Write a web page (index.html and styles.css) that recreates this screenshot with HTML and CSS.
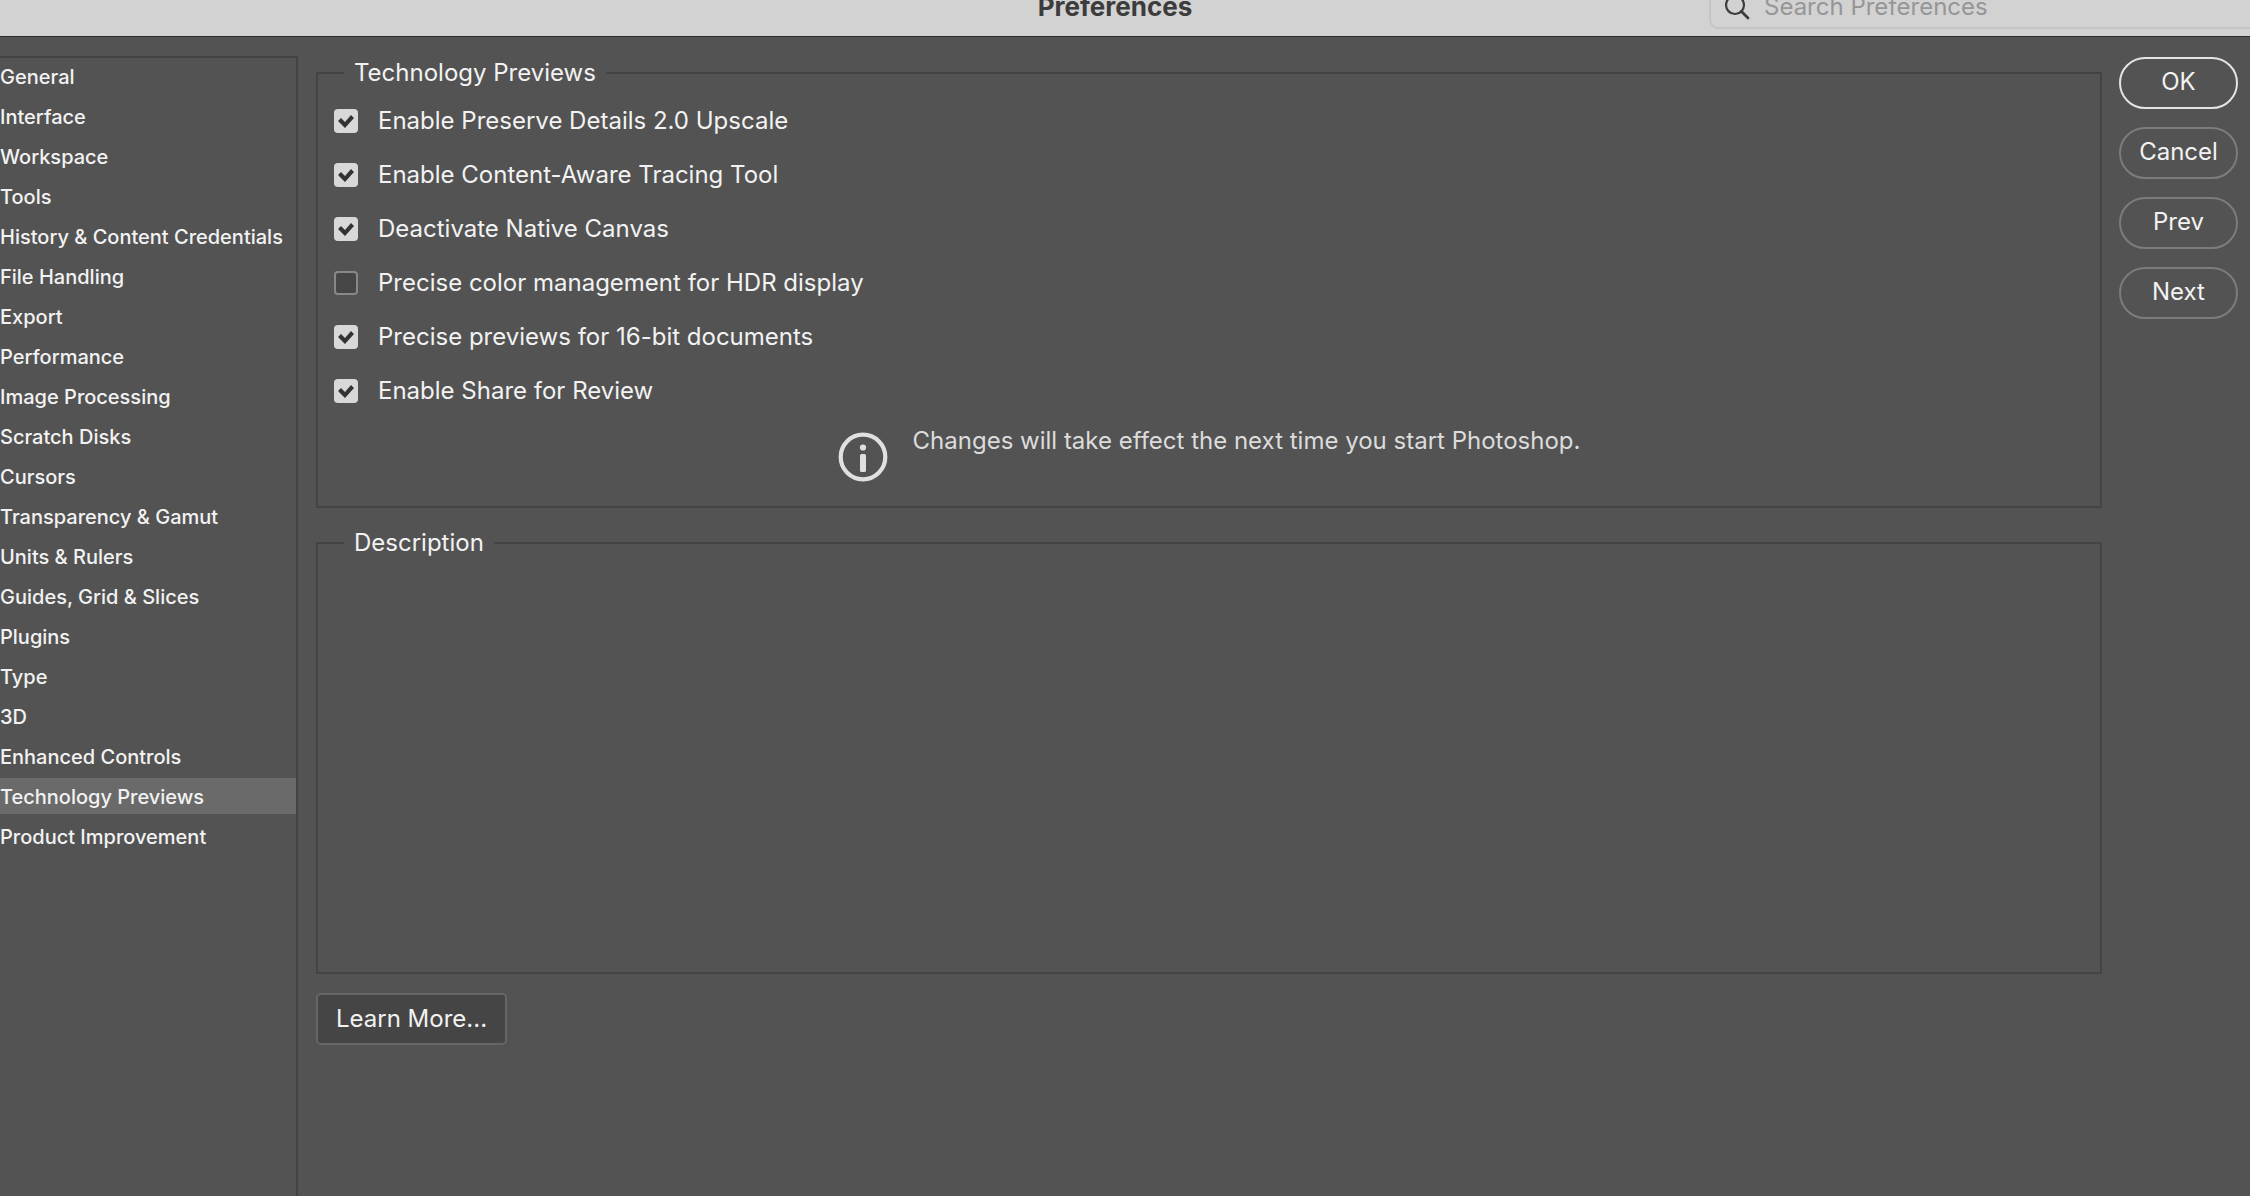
FILE: index.html
```html
<!DOCTYPE html>
<html lang="en">
	<head>
		<meta charset="utf-8" />
		<title>Preferences</title>
		<link rel="stylesheet" href="styles.css">
	</head>
	<body>
		<header class="titlebar">
			<h1>Preferences</h1>
			<label class="search">
				<svg width="26" height="26" viewBox="0 0 26 26" fill="none" stroke="#3c3c3c" stroke-width="2.2" stroke-linecap="round"><circle cx="11" cy="11" r="9"/><path d="M17.5 17.5L24 24" stroke-width="2.8"/></svg>
				<input type="text" placeholder="Search Preferences" aria-label="Search Preferences" />
			</label>
		</header>
		<div class="content">
			<nav class="sidebar">
				<ul>
					<li><a href="#">General</a></li>
					<li><a href="#">Interface</a></li>
					<li><a href="#">Workspace</a></li>
					<li><a href="#">Tools</a></li>
					<li><a href="#">History &amp; Content Credentials</a></li>
					<li><a href="#">File Handling</a></li>
					<li><a href="#">Export</a></li>
					<li><a href="#">Performance</a></li>
					<li><a href="#">Image Processing</a></li>
					<li><a href="#">Scratch Disks</a></li>
					<li><a href="#">Cursors</a></li>
					<li><a href="#">Transparency &amp; Gamut</a></li>
					<li><a href="#">Units &amp; Rulers</a></li>
					<li><a href="#">Guides, Grid &amp; Slices</a></li>
					<li><a href="#">Plugins</a></li>
					<li><a href="#">Type</a></li>
					<li><a href="#">3D</a></li>
					<li><a href="#">Enhanced Controls</a></li>
					<li><a href="#" class="active">Technology Previews</a></li>
					<li><a href="#">Product Improvement</a></li>
				</ul>
			</nav>
			<main class="panel">
				<fieldset>
					<legend>Technology Previews</legend>
					<label class="option"><input type="checkbox" checked />Enable Preserve Details 2.0 Upscale</label>
					<label class="option"><input type="checkbox" checked />Enable Content-Aware Tracing Tool</label>
					<label class="option"><input type="checkbox" checked />Deactivate Native Canvas</label>
					<label class="option"><input type="checkbox" />Precise color management for HDR display</label>
					<label class="option"><input type="checkbox" checked />Precise previews for 16-bit documents</label>
					<label class="option"><input type="checkbox" checked />Enable Share for Review</label>
					<div class="notice">
						<svg width="50" height="50" viewBox="0 0 50 50" fill="#e0e0e0"><circle cx="25" cy="25" r="22.3" fill="none" stroke="#e0e0e0" stroke-width="4.2"/><circle cx="25" cy="15.5" r="3.1"/><rect x="22" y="22" width="6" height="18" rx="1.5"/></svg>
						<p>Changes will take effect the next time you start Photoshop.</p>
					</div>
				</fieldset>
				<fieldset class="description">
					<legend>Description</legend>
				</fieldset>
				<button type="button" class="learn">Learn More...</button>
			</main>
			<div class="actions">
				<button type="button" class="default">OK</button>
				<button type="button">Cancel</button>
				<button type="button">Prev</button>
				<button type="button">Next</button>
			</div>
		</div>
	</body>
</html>
```
FILE: styles.css
```css
* {box-sizing: border-box}
body {margin: 0; min-height: 100vh; display: flex; flex-direction: column; background: #535353; color: #f2f2f2; font: 24px/32px Inter, "Liberation Sans", sans-serif}
ul {margin: 0; padding: 0; list-style: none}
a {color: inherit; text-decoration: none}
p {margin: 0}
button, input {font: inherit; color: inherit}
button {height: 52px; padding: 0 0 3px; border: 2px solid #7c7c7c; background: none; cursor: pointer}

.titlebar {display: grid; grid-template-columns: 521px 1fr 541px; grid-template-rows: 100%; align-items: end; height: 37px; padding-bottom: 7px; overflow: hidden; background: #d2d2d2; border-bottom: 1px solid #2b2b2b}
.titlebar h1 {grid-column: 2; margin: 0; font-size: 26px; font-weight: 700; line-height: 44px; text-align: center; color: #3c3c3c}
.search {display: flex; align-items: center; gap: 14px; height: 44px; margin-right: -12px; padding-left: 13px; border: 2px solid #c5c5c5; border-radius: 9px}
.search input {flex: 1; min-width: 0; padding: 0; border: 0; outline: 0; background: none; color: #3c3c3c}
.search input::placeholder {color: #969696; opacity: 1}

.content {flex: 1; display: flex}
.sidebar {flex: none; width: 298px; margin-top: 19px; border: solid #444; border-width: 2px 2px 0 0; font-size: 20px; font-weight: 500}
.sidebar li {margin-bottom: 4px}
.sidebar a {display: block; padding-top: 2px; line-height: 34px; white-space: nowrap}
.sidebar a.active {background: #6a6a6a}

.panel {flex: 1; min-width: 0; display: flex; flex-direction: column; gap: 19px; padding: 20px 17px 0 18px}
fieldset {min-width: 0; margin: 0; padding: 5px 16px 24px; border: 2px solid #444}
legend {margin-left: 10px; padding: 0 10px}
.description {min-height: 447px}
.option {display: flex; align-items: center; height: 54px}
.option input {appearance: none; width: 24px; height: 24px; margin: 0 20px 0 0; border: 2px solid #888; border-radius: 4px; background: #464646}
.option input:checked {border: 0; background: #d8d8d8}
.option input:checked::before {content: ""; display: block; height: 24px; background: #333; clip-path: polygon(4px 12px, 7px 9px, 11px 13px, 17px 6px, 20px 9px, 11px 19px)}
.notice {display: flex; justify-content: center; gap: 25px; padding-top: 7px; color: #dcdcdc}
.notice svg {margin-top: 7px}
.learn {align-self: flex-start; padding: 0 18px; border-color: #666; border-radius: 5px; background: #454545}

.actions {flex: none; display: flex; flex-direction: column; gap: 18px; width: 131px; padding: 20px 12px 0 0}
.actions button {border-radius: 26px}
.actions .default {border-color: #e4e4e4}
```
